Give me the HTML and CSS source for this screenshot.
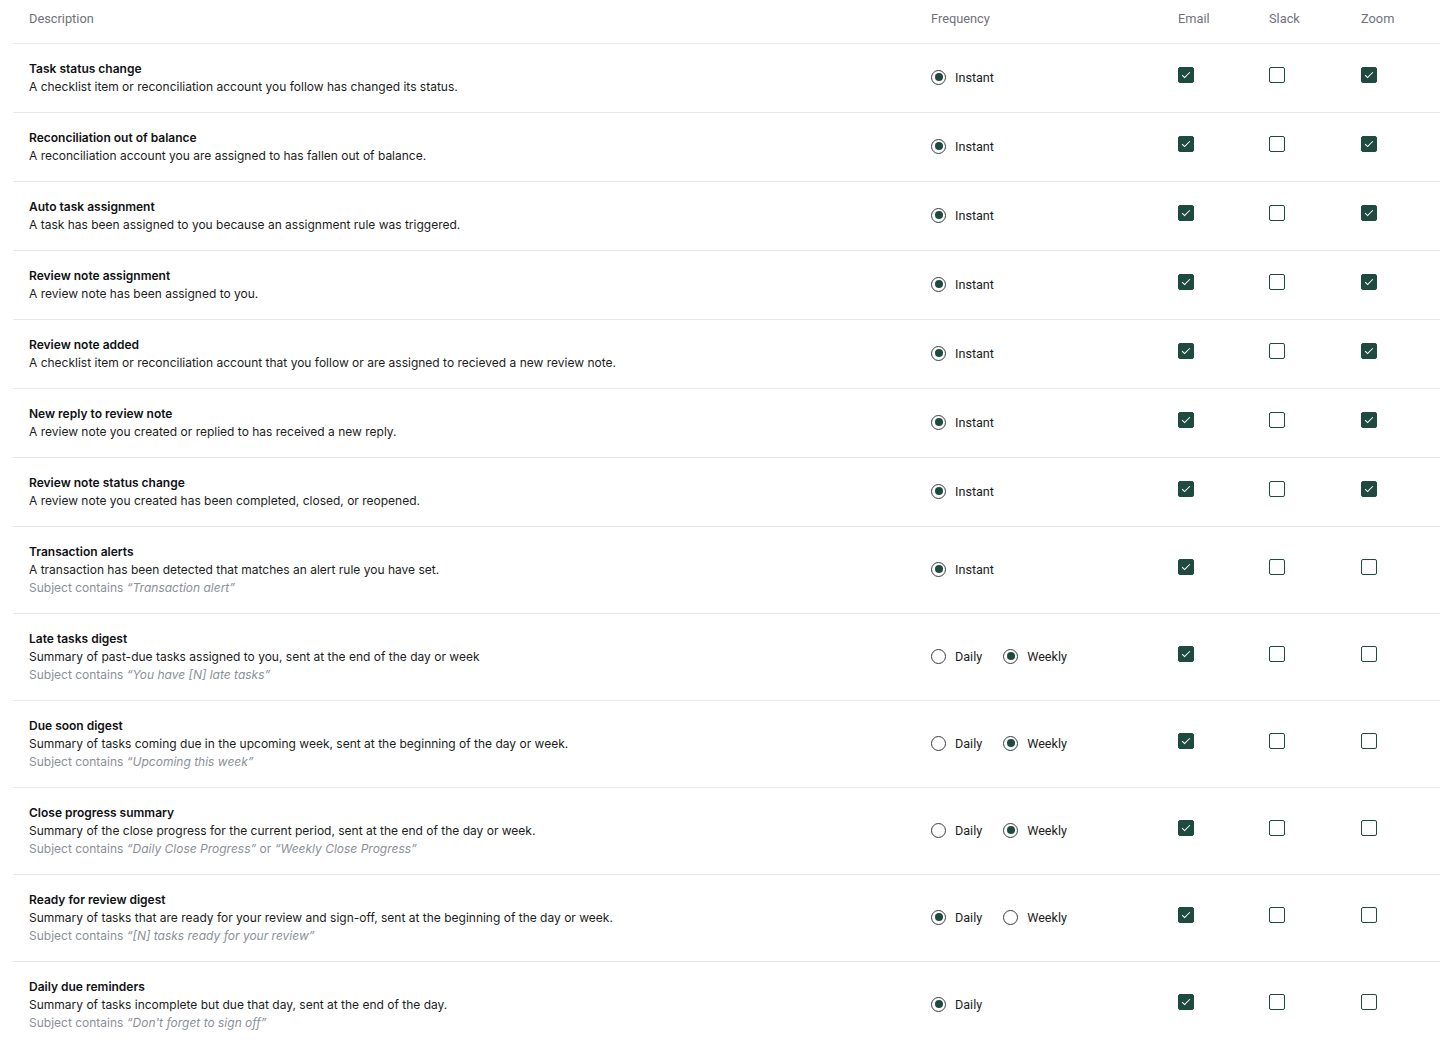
FILE: index.html
```html
<!DOCTYPE html>
<html>
<head>
<meta charset="utf-8">
<link rel="stylesheet" href="styles.css">
</head>
<body>
<div class="table">
  <div class="row head">
    <div class="cell">Description</div>
    <div class="cell">Frequency</div>
    <div class="cell">Email</div>
    <div class="cell">Slack</div>
    <div class="cell">Zoom</div>
  </div>

  <div class="row">
    <div class="cell desc"><div class="title">Task status change</div><div class="text">A checklist item or reconciliation account you follow has changed its status.</div></div>
    <div class="cell freq"><span class="opt"><span class="radio on"></span>Instant</span></div>
    <div class="cell chk"><span class="box on"></span></div>
    <div class="cell chk"><span class="box"></span></div>
    <div class="cell chk"><span class="box on"></span></div>
  </div>

  <div class="row">
    <div class="cell desc"><div class="title">Reconciliation out of balance</div><div class="text">A reconciliation account you are assigned to has fallen out of balance.</div></div>
    <div class="cell freq"><span class="opt"><span class="radio on"></span>Instant</span></div>
    <div class="cell chk"><span class="box on"></span></div>
    <div class="cell chk"><span class="box"></span></div>
    <div class="cell chk"><span class="box on"></span></div>
  </div>

  <div class="row">
    <div class="cell desc"><div class="title">Auto task assignment</div><div class="text">A task has been assigned to you because an assignment rule was triggered.</div></div>
    <div class="cell freq"><span class="opt"><span class="radio on"></span>Instant</span></div>
    <div class="cell chk"><span class="box on"></span></div>
    <div class="cell chk"><span class="box"></span></div>
    <div class="cell chk"><span class="box on"></span></div>
  </div>

  <div class="row">
    <div class="cell desc"><div class="title">Review note assignment</div><div class="text">A review note has been assigned to you.</div></div>
    <div class="cell freq"><span class="opt"><span class="radio on"></span>Instant</span></div>
    <div class="cell chk"><span class="box on"></span></div>
    <div class="cell chk"><span class="box"></span></div>
    <div class="cell chk"><span class="box on"></span></div>
  </div>

  <div class="row">
    <div class="cell desc"><div class="title">Review note added</div><div class="text">A checklist item or reconciliation account that you follow or are assigned to recieved a new review note.</div></div>
    <div class="cell freq"><span class="opt"><span class="radio on"></span>Instant</span></div>
    <div class="cell chk"><span class="box on"></span></div>
    <div class="cell chk"><span class="box"></span></div>
    <div class="cell chk"><span class="box on"></span></div>
  </div>

  <div class="row">
    <div class="cell desc"><div class="title">New reply to review note</div><div class="text">A review note you created or replied to has received a new reply.</div></div>
    <div class="cell freq"><span class="opt"><span class="radio on"></span>Instant</span></div>
    <div class="cell chk"><span class="box on"></span></div>
    <div class="cell chk"><span class="box"></span></div>
    <div class="cell chk"><span class="box on"></span></div>
  </div>

  <div class="row">
    <div class="cell desc"><div class="title">Review note status change</div><div class="text">A review note you created has been completed, closed, or reopened.</div></div>
    <div class="cell freq"><span class="opt"><span class="radio on"></span>Instant</span></div>
    <div class="cell chk"><span class="box on"></span></div>
    <div class="cell chk"><span class="box"></span></div>
    <div class="cell chk"><span class="box on"></span></div>
  </div>

  <div class="row">
    <div class="cell desc"><div class="title">Transaction alerts</div><div class="text">A transaction has been detected that matches an alert rule you have set.</div><div class="subject">Subject contains <em>“Transaction alert”</em></div></div>
    <div class="cell freq"><span class="opt"><span class="radio on"></span>Instant</span></div>
    <div class="cell chk"><span class="box on"></span></div>
    <div class="cell chk"><span class="box"></span></div>
    <div class="cell chk"><span class="box"></span></div>
  </div>

  <div class="row">
    <div class="cell desc"><div class="title">Late tasks digest</div><div class="text">Summary of past-due tasks assigned to you, sent at the end of the day or week</div><div class="subject">Subject contains <em>“You have [N] late tasks”</em></div></div>
    <div class="cell freq"><span class="opt"><span class="radio"></span>Daily</span><span class="opt"><span class="radio on"></span>Weekly</span></div>
    <div class="cell chk"><span class="box on"></span></div>
    <div class="cell chk"><span class="box"></span></div>
    <div class="cell chk"><span class="box"></span></div>
  </div>

  <div class="row">
    <div class="cell desc"><div class="title">Due soon digest</div><div class="text">Summary of tasks coming due in the upcoming week, sent at the beginning of the day or week.</div><div class="subject">Subject contains <em>“Upcoming this week”</em></div></div>
    <div class="cell freq"><span class="opt"><span class="radio"></span>Daily</span><span class="opt"><span class="radio on"></span>Weekly</span></div>
    <div class="cell chk"><span class="box on"></span></div>
    <div class="cell chk"><span class="box"></span></div>
    <div class="cell chk"><span class="box"></span></div>
  </div>

  <div class="row">
    <div class="cell desc"><div class="title">Close progress summary</div><div class="text">Summary of the close progress for the current period, sent at the end of the day or week.</div><div class="subject">Subject contains <em>“Daily Close Progress”</em> or <em>“Weekly Close Progress”</em></div></div>
    <div class="cell freq"><span class="opt"><span class="radio"></span>Daily</span><span class="opt"><span class="radio on"></span>Weekly</span></div>
    <div class="cell chk"><span class="box on"></span></div>
    <div class="cell chk"><span class="box"></span></div>
    <div class="cell chk"><span class="box"></span></div>
  </div>

  <div class="row">
    <div class="cell desc"><div class="title">Ready for review digest</div><div class="text">Summary of tasks that are ready for your review and sign-off, sent at the beginning of the day or week.</div><div class="subject">Subject contains <em>“[N] tasks ready for your review”</em></div></div>
    <div class="cell freq"><span class="opt"><span class="radio on"></span>Daily</span><span class="opt"><span class="radio"></span>Weekly</span></div>
    <div class="cell chk"><span class="box on"></span></div>
    <div class="cell chk"><span class="box"></span></div>
    <div class="cell chk"><span class="box"></span></div>
  </div>

  <div class="row">
    <div class="cell desc"><div class="title">Daily due reminders</div><div class="text">Summary of tasks incomplete but due that day, sent at the end of the day.</div><div class="subject">Subject contains <em>“Don't forget to sign off”</em></div></div>
    <div class="cell freq"><span class="opt"><span class="radio on"></span>Daily</span></div>
    <div class="cell chk"><span class="box on"></span></div>
    <div class="cell chk"><span class="box"></span></div>
    <div class="cell chk"><span class="box"></span></div>
  </div>
</div>
</body>
</html>
```

FILE: styles.css
```css
html, body {
  margin: 0;
  padding: 0;
  background: #ffffff;
}

body {
  font-family: Inter, "Liberation Sans", sans-serif;
  color: #111418;
}

.table {
  margin: 0 14px 0 13px;
}

.row {
  display: grid;
  grid-template-columns: 902px 247px 91px 92px 1fr;
  border-bottom: 1px solid #e6e7ea;
}

.cell {
  padding: 16px 16px;
  display: flex;
  align-items: center;
}

.head .cell {
  font-family: Roboto, "Liberation Sans", sans-serif;
  font-size: 12.8px;
  line-height: 18px;
  color: #6f737a;
  padding: 10px 16px 15px;
}

.desc {
  display: block;
  font-size: 12px;
  line-height: 18px;
}

.title {
  font-weight: 600;
  color: #0f1114;
}

.text {
  color: #1b1d21;
}

.subject {
  color: #8b9098;
}

.subject em {
  font-style: italic;
  color: #8b9098;
}

.freq {
  font-family: Roboto, "Liberation Sans", sans-serif;
  font-size: 12.6px;
  color: #1b1d21;
  gap: 21px;
}

.opt {
  display: inline-flex;
  align-items: center;
  gap: 9px;
  margin-bottom: 2px;
}

.radio {
  box-sizing: border-box;
  width: 15px;
  height: 15px;
  border-radius: 50%;
  border: 1.2px solid #3a3d42;
  display: inline-flex;
  align-items: center;
  justify-content: center;
  background: #fff;
}

.radio.on::after {
  content: "";
  width: 8px;
  height: 8px;
  border-radius: 50%;
  background: #1f4a3f;
}

.chk {
  align-items: center;
}

.box {
  box-sizing: border-box;
  width: 16px;
  height: 16px;
  border: 1.5px solid #1f4a3f;
  border-radius: 2px;
  margin-bottom: 6px;
  position: relative;
  background: #fff;
}

.box.on {
  background: #1f4a3f;
}

.box.on::after {
  content: "";
  position: absolute;
  left: 4.5px;
  top: 2px;
  width: 3px;
  height: 7px;
  border: solid #ffffff;
  border-width: 0 1.2px 1.2px 0;
  transform: rotate(45deg);
}
```
